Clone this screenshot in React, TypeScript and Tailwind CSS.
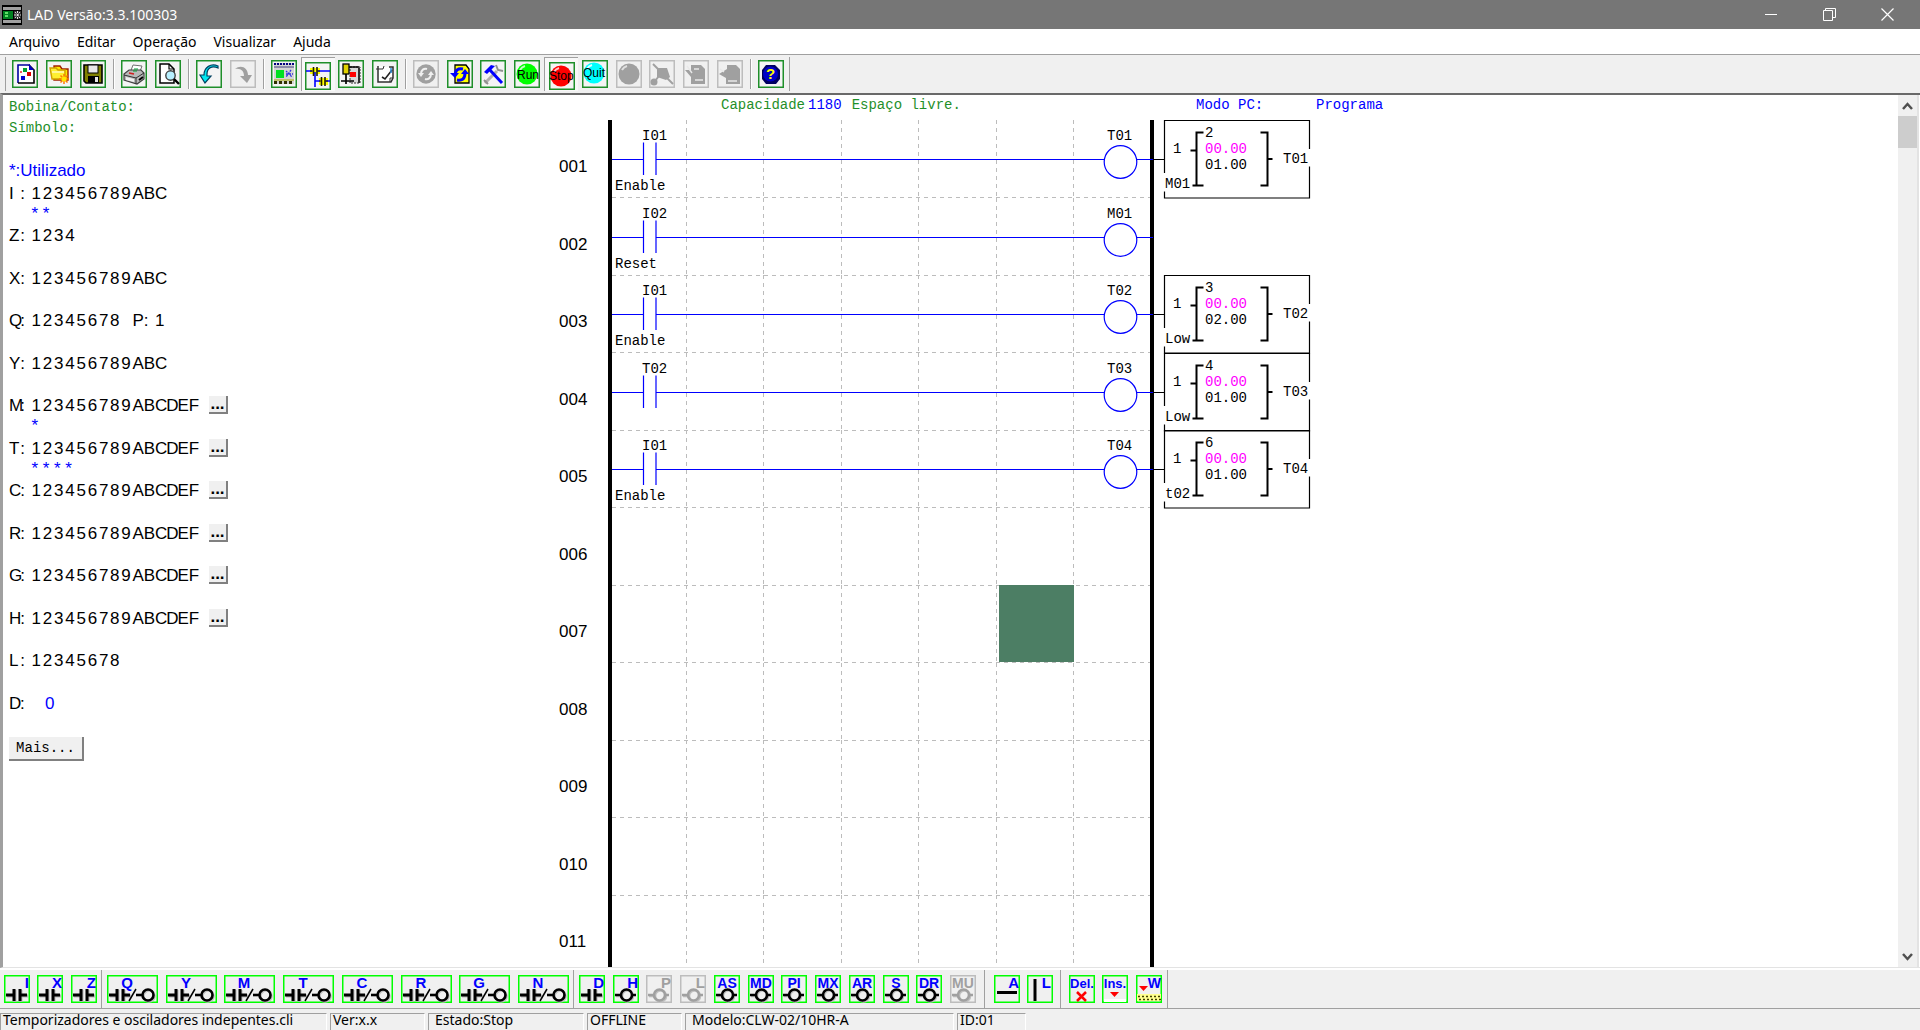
import React from "react";

type Kids = { children?: React.ReactNode };

const GREEN = "#1f8f2a";

/* ---------- toolbar icons (26 x 28 drawings) ---------- */

function Frame({ children, stroke = GREEN }: Kids & { stroke?: string }) {
  return (
    <svg width="26" height="28" viewBox="0 0 26 28" aria-hidden="true">
      <rect x="0.75" y="0.75" width="24.5" height="26.5" fill={stroke === GREEN ? "#f4f4f4" : "none"} stroke={stroke} strokeWidth="1.5" />
      {children}
    </svg>
  );
}

const G = "#a0a0a0";

const icons: Record<string, React.ReactNode> = {
  Novo: (
    <Frame>
      <path d="M6 5h12l4 4v14H6z" fill="#fff" />
      <path d="M6 23V5h12" fill="none" stroke="#0000a0" strokeWidth="1.6" />
      <path d="M17 5l5 5v13H6" fill="none" stroke="#000" strokeWidth="1.6" />
      <path d="M17 4l5 6h-5z" fill="#0000c0" />
      <rect x="11" y="8" width="4" height="4" fill="#00a030" />
      <rect x="15" y="12" width="4" height="4" fill="#e00000" />
      <rect x="9" y="16" width="4" height="4" fill="#0000d0" />
      <rect x="8" y="11" width="2" height="2" fill="#f06060" />
    </Frame>
  ),
  Abrir: (
    <Frame>
      <path d="M8 6h6l2 3h6v11H8z" fill="#ffe800" stroke="#a02000" strokeWidth="1.4" />
      <path d="M4 8h6l2 2h7v9H6z" fill="#ffef30" stroke="#d0a000" strokeWidth="1.4" />
      <path d="M6 12h12" stroke="#fff" />
      <path d="M18 14v10M13 19h10M14.500 15.500l7 7M21.500 15.500l-7 7" stroke="#ff7a00" strokeWidth="1.5" />
      <circle cx="18" cy="19" r="2.5" fill="#ffe800" />
    </Frame>
  ),
  Salvar: (
    <Frame>
      <path d="M4 5h18v18H6l-2-2z" fill="#808000" stroke="#000" strokeWidth="1.6" />
      <rect x="8" y="5" width="10" height="8" fill="#e8e8e8" stroke="#000" />
      <rect x="8" y="16" width="11" height="7" fill="#000" />
      <rect x="15" y="17" width="3" height="5" fill="#e8e8e8" />
    </Frame>
  ),
  Imprimir: (
    <Frame>
      <path d="M9 13l3-8 9 1-3 8z" fill="#fff" stroke="#707070" />
      <path d="M3 14l5-4h12l3 3v6l-7 5-13-4z" fill="#b8b8b8" stroke="#404040" strokeWidth="1.2" />
      <path d="M3 15l12 3 8-5M15 18v6" fill="none" stroke="#303030" />
      <path d="M5 17l8 2v3l-8-2z" fill="#f0f0f0" />
      <path d="M8 13l5 1" stroke="#d02020" strokeWidth="1.6" />
      <path d="M13 9h4M12 11h4" stroke="#00a030" />
      <path d="M18 20l4-3" stroke="#000" strokeWidth="2" />
    </Frame>
  ),
  Visualizar: (
    <Frame>
      <path d="M5 4h9l5 5v14H5z" fill="#fff" stroke="#000" strokeWidth="1.5" />
      <path d="M14 4v5h5" fill="none" stroke="#000" strokeWidth="1.2" />
      <circle cx="15.5" cy="15.5" r="4.7" fill="#b8f0ff" stroke="#404040" strokeWidth="1.4" />
      <path d="M19 19l5 5" stroke="#000" strokeWidth="2.4" />
    </Frame>
  ),
  Desfazer: (
    <Frame>
      <path d="M22 8c-6-3-11 0-11 6v2h4l-6 7-5-8h4c0-8 7-12 14-9z" fill="#00e8f0" stroke="#004060" strokeWidth="1.2" />
    </Frame>
  ),
  Refazer: (
    <Frame stroke="#bdbdbd">
      <path d="M5 9c6-5 13-1 13 6h4l-5 8-7-7h4c0-5-3-8-9-7z" fill={G} />
    </Frame>
  ),
  Teclado: (
    <Frame>
      <rect x="3" y="3" width="20" height="21" fill="#d4d4d4" />
      <path d="M3 4h20" stroke="#000080" strokeWidth="2" strokeDasharray="2 1" />
      <path d="M3 7h20" stroke="#404080" />
      <rect x="5" y="10" width="8" height="8" fill="#00e020" />
      <path d="M15 11l6 6M20 10l-5 7M15 14h7" stroke="#3030e0" strokeWidth="1.3" strokeDasharray="2 1" />
      <path d="M3 22.5h20" stroke="#303000" strokeWidth="3" strokeDasharray="3 2" />
      <path d="M3 20h20" stroke="#b0b000" />
    </Frame>
  ),
  Ladder: (
    <Frame>
      <path d="M5 6h10v6H5zM14 16h9v7h-9z" fill="#ffff00" />
      <path d="M1 9h6M13 9h12M10 10v15M10 19h5M21 19h4" stroke="#0000ff" strokeWidth="1.6" fill="none" />
      <path d="M8.5 5v9M12 5v9M16.5 15v9M20 15v9" stroke="#202000" strokeWidth="1.6" />
      <path d="M5 9h3M12 9h3M14 19h2M20 19h3" stroke="#202000" />
    </Frame>
  ),
  FBD: (
    <Frame>
      <rect x="12" y="7" width="10" height="16" fill="#d8d8d8" stroke="#303030" strokeDasharray="2 1" />
      <rect x="5" y="4" width="6" height="10" fill="#e0d000" stroke="#000" strokeWidth="1.3" />
      <path d="M8 14v10M3 21h13M11 7h10" stroke="#000" strokeWidth="1.7" />
      <rect x="12" y="12" width="6" height="5" fill="#ff0000" />
      <path d="M21 8v15" stroke="#303030" strokeWidth="2" />
    </Frame>
  ),
  Simbolo: (
    <Frame>
      <path d="M6 6v16h13l2-4V7h-4" fill="#fff" stroke="#303030" strokeWidth="1.5" />
      <path d="M4 9h7l1-3M18 22v-4h3" fill="none" stroke="#303030" />
      <path d="M10 17l3 2 7-9" fill="none" stroke="#202020" strokeWidth="1.6" />
      <path d="M19 8v5" stroke="#3090e0" strokeWidth="1.5" />
    </Frame>
  ),
  Monitor: (
    <Frame stroke="#bdbdbd">
      <circle cx="13" cy="14" r="9.7" fill={G} />
      <path d="M8 14c0-4 3-6 6-5M18 14c0 4-3 6-6 5" fill="none" stroke="#f0f0f0" strokeWidth="2" />
      <path d="M5 13h6l-3 4zM15 15h6l-3-4z" fill="#f0f0f0" />
    </Frame>
  ),
  Simulador: (
    <Frame>
      <path d="M8 5h11l3 4v14H8z" fill="#ffff00" stroke="#000" strokeWidth="1.3" />
      <path d="M8 16c0-6 3-8 8-7M18 13c0 6-3 8-8 7" fill="none" stroke="#0000ff" strokeWidth="3" />
      <path d="M3 13h9l-4 5zM14 14h8l-4-5z" fill="#0000ff" />
    </Frame>
  ),
  Ferramentas: (
    <Frame>
      <path d="M5 23L17 11" stroke="#b0b0b0" strokeWidth="3" />
      <path d="M16 5l2 5 5 1M4 20l4 4" stroke="#909090" strokeWidth="2" fill="none" />
      <path d="M9 9l13 14" stroke="#0000ff" strokeWidth="3" />
      <path d="M4 12l7-7 4 1-8 8z" fill="#0000ff" />
    </Frame>
  ),
  Run: (
    <Frame>
      <circle cx="13" cy="14" r="10.5" fill="#00ff00" />
      <path d="M6 10a8 8 0 0 1 5-4" stroke="#c0ffc0" strokeWidth="2" fill="none" />
      <text x="3" y="19" fontSize="12" fontFamily="Liberation Sans, sans-serif">Run</text>
    </Frame>
  ),
  Stop: (
    <Frame>
      <circle cx="12" cy="14" r="10.5" fill="#ff0000" />
      <path d="M5 10a8 8 0 0 1 5-4" stroke="#ffc0c0" strokeWidth="2" fill="none" />
      <text x="0" y="18" fontSize="12" fontFamily="Liberation Sans, sans-serif">Stop</text>
    </Frame>
  ),
  Quit: (
    <Frame>
      <circle cx="12" cy="13" r="10.5" fill="#00ffff" />
      <path d="M5 9a8 8 0 0 1 5-4" stroke="#e0ffff" strokeWidth="2" fill="none" />
      <text x="1" y="17" fontSize="12" fontFamily="Liberation Sans, sans-serif">Quit</text>
    </Frame>
  ),
  Led: (
    <Frame stroke="#bdbdbd">
      <circle cx="13" cy="14" r="10.5" fill={G} />
      <path d="M6 10a8 8 0 0 1 5-4" stroke="#e0e0e0" strokeWidth="2" fill="none" />
    </Frame>
  ),
  Conexao: (
    <Frame stroke="#bdbdbd">
      <path d="M4 4l20 20" stroke={G} strokeWidth="2" />
      <path d="M8 8h10l3 9-4 3-9-3z" fill={G} />
      <circle cx="5" cy="22" r="3.5" fill={G} />
      <path d="M6 21l4-5" stroke={G} strokeWidth="2" />
    </Frame>
  ),
  Ler: (
    <Frame stroke="#bdbdbd">
      <path d="M8 5h10l4 4v15H8v-7l-6-7h6z" fill={G} />
      <path d="M11 9h5M12 20h8M4 6l5 7" stroke="#e8e8e8" strokeWidth="1.4" />
    </Frame>
  ),
  Escrever: (
    <Frame stroke="#bdbdbd">
      <path d="M10 5h9l4 4v15H9v-6l-7-4 8-5z" fill={G} />
      <path d="M11 21h9M3 9l4 3" stroke="#e8e8e8" strokeWidth="1.4" />
    </Frame>
  ),
  Ajuda: (
    <Frame>
      <path d="M8 5h9l5 5v9l-4 5H8l-4-5v-9z" fill="#000060" />
      <circle cx="12.5" cy="14" r="7.5" fill="#0000c8" />
      <text x="8" y="19" fontSize="15" fontWeight="700" fill="#ffff00" fontFamily="Liberation Sans, sans-serif">?</text>
    </Frame>
  ),
};

const topGroups: { names: string[]; grid: string }[] = [
  { names: ["Novo", "Abrir", "Salvar"], grid: "grid w-[102px] grid-cols-3" },
  { names: ["Imprimir", "Visualizar"], grid: "grid w-[68px] grid-cols-2" },
  { names: ["Desfazer", "Refazer"], grid: "grid w-[68px] grid-cols-2" },
  { names: ["Teclado", "Ladder", "FBD", "Simbolo"], grid: "grid w-[135px] grid-cols-4" },
  {
    names: ["Monitor", "Simulador", "Ferramentas", "Run", "Stop", "Quit", "Led", "Conexao", "Ler", "Escrever"],
    grid: "grid w-[338px] grid-cols-10",
  },
  { names: ["Ajuda"], grid: "grid w-[34px] grid-cols-1" },
];
const pressed = new Set(["Ladder", "Stop"]);
const disabled = new Set(["Refazer", "Monitor", "Led", "Conexao", "Ler", "Escrever"]);

function Sep() {
  return (
    <div className="flex w-[7px] justify-center">
      <div className="my-[2px] w-[2px] border-r border-l border-l-[#a0a0a0] border-r-white" />
    </div>
  );
}

function TopToolbar() {
  return (
    <div className="flex h-[39px] shrink-0 border-t border-[#a0a0a0] bg-[#f0f0f0] py-[2px] pl-[4px]">
      <div className="mr-[2px] w-[2px] border-r border-[#a0a0a0]" />
      {topGroups.map(({ names, grid }, i) => (
        <React.Fragment key={i}>
          {i > 0 && <Sep />}
          <div className={grid}>
            {names.map((name) => (
              <button
                key={name}
                aria-label={name}
                disabled={disabled.has(name)}
                className={
                  pressed.has(name)
                    ? "flex items-center justify-center border-t border-l border-[#a0a0a0] bg-[#f8f8f8] pt-[2px]"
                    : "flex items-center justify-center"
                }
              >
                {icons[name]}
              </button>
            ))}
          </div>
        </React.Fragment>
      ))}
      <div className="w-[2px] border-r border-[#a0a0a0]" />
    </div>
  );
}

/* ---------- ladder element palette ---------- */

const LIME = "#00ff00";

function Contact() {
  const d = "M2 20h7M10 14v12M16 14v12M16 20h7";
  return (
    <>
      <path d={d} stroke="#b8b8b8" strokeWidth="3" fill="none" transform="translate(1 1)" />
      <path d={d} stroke="#000" strokeWidth="3" fill="none" />
    </>
  );
}

function Coil({ color = "#000" }: { color?: string }) {
  return (
    <g fill="none" strokeWidth="2.6">
      <g stroke="#c0c0c0" transform="translate(1 1)">
        <circle cx="13.5" cy="20" r="5.5" />
        <path d="M2 20h6" />
      </g>
      <g stroke={color}>
        <circle cx="13.5" cy="20" r="5.5" />
        <path d="M2 20h6M19 20h4" />
      </g>
    </g>
  );
}

function Glyph({ children, x, size = 15, color = "#0000ff", anchor = "end" }: Kids & { x: number; size?: number; color?: string; anchor?: "end" | "middle" }) {
  return (
    <text x={x} y="13" textAnchor={anchor} fontSize={size} fontWeight="700" fill={color} fontFamily="Liberation Sans, sans-serif">
      {children}
    </text>
  );
}

function Small({ label, children, off = false }: Kids & { label: string; off?: boolean }) {
  return (
    <button aria-label={label} disabled={off} className="flex justify-center">
      <svg width="26" height="28" viewBox="0 0 26 28" aria-hidden="true">
        <rect x="0.75" y="0.75" width="24.5" height="26.5" fill="#f0f0f0" stroke={off ? "#bdbdbd" : LIME} strokeWidth="1.5" />
        {children}
      </svg>
    </button>
  );
}

function Wide({ label }: { label: string }) {
  return (
    <button aria-label={label} className="flex justify-center">
      <svg width="51" height="28" viewBox="0 0 51 28" aria-hidden="true">
        <rect x="0.75" y="0.75" width="49.5" height="26.5" fill="#f0f0f0" stroke={LIME} strokeWidth="1.5" />
        <Contact />
        <path d="M22 26l7-12" stroke="#000" strokeWidth="1.5" />
        <g fill="none" strokeWidth="2.6">
          <g stroke="#c0c0c0" transform="translate(1 1)">
            <circle cx="41" cy="20" r="5.5" />
          </g>
          <g stroke="#000">
            <circle cx="41" cy="20" r="5.5" />
            <path d="M29 20h7" />
          </g>
        </g>
        <Glyph x={20} anchor="middle">{label}</Glyph>
      </svg>
    </button>
  );
}

function Palette() {
  return (
    <div className="flex h-[41px] shrink-0 border-t-2 border-b border-t-white border-b-[#a0a0a0] bg-[#f0f0f0]">
      <div className="grid w-[101px] grid-cols-3 items-center">
        {["I", "X", "Z"].map((l) => (
          <Small key={l} label={l}>
            <Contact />
            <Glyph x={25}>{l}</Glyph>
          </Small>
        ))}
      </div>
      <div className="w-[2px] border-l border-[#a0a0a0]" />
      <div className="grid w-[470px] grid-cols-8 items-center">
        {["Q", "Y", "M", "T", "C", "R", "G", "N"].map((l) => (
          <Wide key={l} label={l} />
        ))}
      </div>
      <div className="w-[2px] border-l border-[#a0a0a0]" />
      <div className="grid w-[405px] grid-cols-12 items-center">
        <Small label="D">
          <Contact />
          <Glyph x={25}>D</Glyph>
        </Small>
        <Small label="H">
          <Coil />
          <Glyph x={25}>H</Glyph>
        </Small>
        {["P", "L"].map((l) => (
          <Small key={l} label={l} off>
            <Coil color={G} />
            <Glyph x={25} color={G}>{l}</Glyph>
          </Small>
        ))}
        {["AS", "MD", "PI", "MX", "AR", "S", "DR"].map((l) => (
          <Small key={l} label={l}>
            <Coil />
            <Glyph x={13} size={14} anchor="middle">{l}</Glyph>
          </Small>
        ))}
        <Small label="MU" off>
          <Coil color={G} />
          <Glyph x={13} size={14} color={G} anchor="middle">MU</Glyph>
        </Small>
      </div>
      <div className="mx-[4px] w-[2px] border-l border-[#a0a0a0]" />
      <div className="grid w-[67px] grid-cols-2 items-center">
        <Small label="A">
          <path d="M3 17.5h20" stroke="#000" strokeWidth="3" />
          <Glyph x={25}>A</Glyph>
        </Small>
        <Small label="L">
          <path d="M8 4v22" stroke="#000" strokeWidth="3" />
          <Glyph x={24}>L</Glyph>
        </Small>
      </div>
      <div className="mx-[3px] w-[2px] border-l border-[#a0a0a0]" />
      <div className="grid w-[101px] grid-cols-3 items-center">
        <Small label="Del.">
          <Glyph x={13} size={13} anchor="middle">Del.</Glyph>
          <path d="M8 17l9 9M17 17l-9 9" stroke="#ff0000" strokeWidth="2.5" />
        </Small>
        <Small label="Ins.">
          <path d="M2 24h22v3H2z" fill="#fff" />
          <Glyph x={13} size={13} anchor="middle">Ins.</Glyph>
          <path d="M8 17h9l-4.5 5z" fill="#ff0000" />
        </Small>
        <Small label="W">
          <Glyph x={25} size={14}>W</Glyph>
          <path d="M3 11h9l-4.500 5z" fill="#ff0000" />
          <path d="M1 19h24v7H1z" fill="#ffff90" />
          <path d="M2 21.5h22M3 24.5h22" stroke="#404000" strokeWidth="1.5" strokeDasharray="2 2" />
        </Small>
      </div>
      <div className="w-[2px] border-r border-[#a0a0a0]" />
    </div>
  );
}

/* ---------- device usage panel ---------- */

type Device = { name: string; bits: string; used?: number; more?: boolean };

const devices: Device[] = [
  { name: "I", bits: "123456789ABC", used: 2 },
  { name: "Z", bits: "1234" },
  { name: "X", bits: "123456789ABC" },
  { name: "Q", bits: "12345678 P:1" },
  { name: "Y", bits: "123456789ABC" },
  { name: "M", bits: "123456789ABCDEF", used: 1, more: true },
  { name: "T", bits: "123456789ABCDEF", used: 4, more: true },
  { name: "C", bits: "123456789ABCDEF", more: true },
  { name: "R", bits: "123456789ABCDEF", more: true },
  { name: "G", bits: "123456789ABCDEF", more: true },
  { name: "H", bits: "123456789ABCDEF", more: true },
  { name: "L", bits: "12345678" },
];

function Cells({ text }: { text: string }) {
  return (
    <>
      {text.split("").map((c, i) => (
        <span key={i}>{c}</span>
      ))}
    </>
  );
}

function DeviceRow({ name, bits, used = 0, more }: Device) {
  return (
    <div className="flex h-[42px] items-start even:h-[43px]">
      <div className="grid w-[191px] grid-cols-17 leading-[20px]">
        <Cells text={name + ":" + bits} />
        {used > 0 && (
          <div className="col-span-17 grid grid-cols-17 text-[#0000ff]">
            <span className="col-span-2" />
            <Cells text={"*".repeat(used)} />
          </div>
        )}
      </div>
      {more && (
        <button aria-label={"Mais " + name} className="ml-[9px] h-[18px] w-[19px] border-r-2 border-b-2 border-[#808080] bg-[#f0f0f0] text-[17px] leading-[16px] font-bold">
          ...
        </button>
      )}
    </div>
  );
}

function DevicePanel() {
  return (
    <aside className="w-[505px] shrink-0 pt-[2px] pl-[6px] font-['Liberation_Sans',sans-serif] text-[17px]">
      <div className="font-['Liberation_Mono',monospace] text-[14px] leading-[21px] text-[#1f8f2a]">
        <p>Bobina/Contato:</p>
        <p>Símbolo:</p>
      </div>
      <p className="mt-[22px] leading-[20px] text-[#0000ff]">*:Utilizado</p>
      <div className="mt-[3px]">
        {devices.map((d) => (
          <DeviceRow key={d.name} {...d} />
        ))}
        <div className="flex h-[40px] leading-[20px]">
          <span className="w-[11px]">D</span>
          <span className="w-[25px]">:</span>
          <span className="text-[#0000ff]">0</span>
        </div>
      </div>
      <button className="h-[24px] w-[75px] border-r-2 border-b-2 border-[#808080] bg-[#f0f0f0] font-['Liberation_Mono',monospace] text-[14px] leading-[22px]">
        Mais...
      </button>
    </aside>
  );
}

/* ---------- ladder diagram ---------- */

type Timer = { mode: string; reset: string; preset: string; coil: string };
type Rung = { n: string; contact?: string; note?: string; coil?: string; timer?: Timer; cursor?: boolean };

const rungs: Rung[] = [
  { n: "001", contact: "I01", note: "Enable", coil: "T01", timer: { mode: "2", reset: "M01", preset: "01.00", coil: "T01" } },
  { n: "002", contact: "I02", note: "Reset", coil: "M01" },
  { n: "003", contact: "I01", note: "Enable", coil: "T02", timer: { mode: "3", reset: "Low", preset: "02.00", coil: "T02" } },
  { n: "004", contact: "T02", coil: "T03", timer: { mode: "4", reset: "Low", preset: "01.00", coil: "T03" } },
  { n: "005", contact: "I01", note: "Enable", coil: "T04", timer: { mode: "6", reset: "t02", preset: "01.00", coil: "T04" } },
  { n: "006" },
  { n: "007", cursor: true },
  { n: "008" },
  { n: "009" },
  { n: "010" },
  { n: "011" },
];

const columns = [79, 156, 234, 311, 389, 466];

function RungCells({ rung }: { rung: Rung }) {
  return (
    <div className="relative w-[546px] font-['Liberation_Mono',monospace] text-[14px] leading-[16px]">
      <svg width="546" height="78" viewBox="0 0 546 78" className="block overflow-visible" aria-hidden="true">
        <g stroke="#bcbcbc" strokeDasharray="4 4" strokeWidth="1">
          {columns.map((x) => (
            <path key={x} d={`M${x - 0.5} 0V77`} />
          ))}
          <path d="M4 77.5H542" />
        </g>
        {rung.cursor && <rect x="391" y="0" width="75" height="77" fill="#4c7e64" />}
        <path d="M2 0V78M544 0V78" stroke="#000" strokeWidth="4" />
        {rung.contact && (
          <g stroke="#0000ff" strokeWidth="1.2" fill="none">
            <path d="M4 39.5H35.5M48 39.5H496M529 39.5H545" />
            <path d="M35.5 22.5V55M48 22.5V55" />
            <circle cx="512.5" cy="42" r="16.3" />
          </g>
        )}
      </svg>
      {rung.contact && <span className="absolute top-[8px] left-[34px]">{rung.contact}</span>}
      {rung.note && <span className="absolute top-[58px] left-[7px]">{rung.note}</span>}
      {rung.coil && <span className="absolute top-[8px] left-[499px]">{rung.coil}</span>}
    </div>
  );
}

function TimerBlock({ timer }: { timer: Timer }) {
  return (
    <div className="relative w-[158px] font-['Liberation_Mono',monospace] text-[14px] leading-[16px]">
      <svg width="158" height="78" viewBox="0 0 158 78" className="block overflow-visible" aria-hidden="true">
        <path
          d="M0 39.5H10.5M10.5 53V0.5H155.5V29M155.5 46.5V78H10.5V71.5"
          fill="none"
          stroke="#000"
          strokeWidth="1.2"
        />
        <path
          d="M49.5 12.5H42.5V65.5M38.5 65.5H49.5M36.5 30.5H42.5M106.5 12.5H113.5V65.5H106.5M113.5 39H118.5"
          fill="none"
          stroke="#000"
          strokeWidth="2"
        />
      </svg>
      <span className="absolute top-[21px] left-[19px]">1</span>
      <span className="absolute top-[5px] left-[51px]">{timer.mode}</span>
      <span className="absolute top-[21px] left-[51px] text-[#ff00ff]">00.00</span>
      <span className="absolute top-[37px] left-[51px]">{timer.preset}</span>
      <span className="absolute top-[31px] left-[129px]">{timer.coil}</span>
      <span className="absolute top-[56px] left-[11px]">{timer.reset}</span>
    </div>
  );
}

function LadderDiagram() {
  return (
    <section className="min-w-0 flex-1">
      <header className="flex h-[25px] pt-[2px] font-['Liberation_Mono',monospace] text-[14px] leading-[16px] text-[#0000ff]">
        <p className="ml-[213px] flex w-[475px] gap-[3px]">
          <span className="text-[#1f8f2a]">Capacidade</span>
          <span>1180</span>
          <span className="ml-[7px] text-[#1f8f2a]">Espaço livre.</span>
        </p>
        <p className="w-[120px]">Modo PC:</p>
        <p>Programa</p>
      </header>
      {rungs.map((r) => (
        <div key={r.n} className="flex h-[77px] even:h-[78px]">
          <span className="w-[100px] pt-[37px] pl-[51px] font-['Liberation_Sans',sans-serif] text-[17px] leading-[20px]">{r.n}</span>
          <RungCells rung={r} />
          {r.timer && <TimerBlock timer={r.timer} />}
        </div>
      ))}
    </section>
  );
}

function Chevron({ d }: { d: string }) {
  return (
    <svg width="19" height="21" viewBox="0 0 19 21" aria-hidden="true">
      <path d={d} fill="none" stroke="#505050" strokeWidth="2.5" />
    </svg>
  );
}

function Scrollbar() {
  return (
    <div className="mr-[1px] flex w-[21px] shrink-0 flex-col border-r-2 border-[#e3e3e3] bg-[#f0f0f0]">
      <button aria-label="Rolar para cima">
        <Chevron d="M5 14l4.500-5 4.500 5" />
      </button>
      <div className="h-[32px] bg-[#cdcdcd]" />
      <div className="flex-1" />
      <button aria-label="Rolar para baixo">
        <Chevron d="M5 8l4.500 5 4.500-5" />
      </button>
    </div>
  );
}

/* ---------- window chrome ---------- */

function TitleBar() {
  return (
    <div className="flex h-[29px] shrink-0 items-center bg-[#767676] pl-[2px] text-[14px] text-white">
      <svg width="20" height="20" viewBox="0 0 20 20" aria-hidden="true">
        <rect width="20" height="20" fill="#000" />
        <rect x="1" y="2" width="18" height="3" fill="#a0a0a0" />
        <rect x="1" y="15" width="18" height="3" fill="#a0a0a0" />
        <rect x="1" y="6" width="10" height="8" fill="#008020" />
        <path d="M3 8h3M3 11h3" stroke="#80ff80" strokeWidth="1.5" />
        <rect x="12" y="6" width="7" height="8" fill="#303030" />
        <path d="M15.500 6v8M12 10h7M13 7l5 6M18 7l-5 6" stroke="#e0e0e0" strokeDasharray="2 1" />
      </svg>
      <span className="ml-[5px] flex-1">LAD Versão:3.3.100303</span>
      <button aria-label="Minimizar" className="flex w-[58px] justify-center">
        <svg width="13" height="13" viewBox="0 0 13 13"><path d="M0 6.5h12" stroke="#fff" /></svg>
      </button>
      <button aria-label="Restaurar" className="flex w-[58px] justify-center">
        <svg width="13" height="13" viewBox="0 0 13 13"><path d="M0.5 2.5h9v10h-9zM2.5 3V0.5h10v9H10" fill="none" stroke="#fff" /></svg>
      </button>
      <button aria-label="Fechar" className="mr-[4px] flex w-[58px] justify-center">
        <svg width="13" height="13" viewBox="0 0 13 13"><path d="M0.5 0.5l12 12M12.5 0.5l-12 12" stroke="#fff" strokeWidth="1.2" /></svg>
      </button>
    </div>
  );
}

function MenuBar() {
  return (
    <nav className="flex h-[25px] shrink-0 items-center gap-[17px] bg-white pl-[9px] text-[14px]">
      {["Arquivo", "Editar", "Operação", "Visualizar", "Ajuda"].map((m) => (
        <button key={m}>{m}</button>
      ))}
    </nav>
  );
}

function StatusBar() {
  const pane = "mr-[3px] border-t border-l border-r border-[#a0a0a0] border-r-white whitespace-nowrap pl-[2px]";
  return (
    <footer className="flex h-[21px] shrink-0 overflow-hidden bg-[#f0f0f0] pt-[4px] text-[14px] leading-[12px]">
      <div className={pane + " w-[327px]"}>Temporizadores e osciladores indepentes.cli</div>
      <div className={pane + " w-[95px]"}>Ver:x.x</div>
      <div className={pane + " w-[156px]"}><span className="pl-[4px]">Estado:Stop</span></div>
      <div className={pane + " w-[95px]"}>OFFLINE</div>
      <div className={pane + " w-[269px]"}><span className="pl-[4px]">Modelo:CLW-02/10HR-A</span></div>
      <div className={pane + " w-[69px]"}>ID:01</div>
    </footer>
  );
}

export default function App() {
  return (
    <div className="flex h-screen flex-col overflow-hidden bg-[#f0f0f0] font-['Noto_Sans',sans-serif] text-black">
      <TitleBar />
      <MenuBar />
      <TopToolbar />
      <main className="flex min-h-0 flex-1 overflow-hidden border-t-2 border-b border-l-3 border-t-[#696969] border-b-[#e3e3e3] border-l-[#a0a0a0] bg-white">
        <DevicePanel />
        <LadderDiagram />
        <Scrollbar />
      </main>
      <Palette />
      <StatusBar />
    </div>
  );
}
